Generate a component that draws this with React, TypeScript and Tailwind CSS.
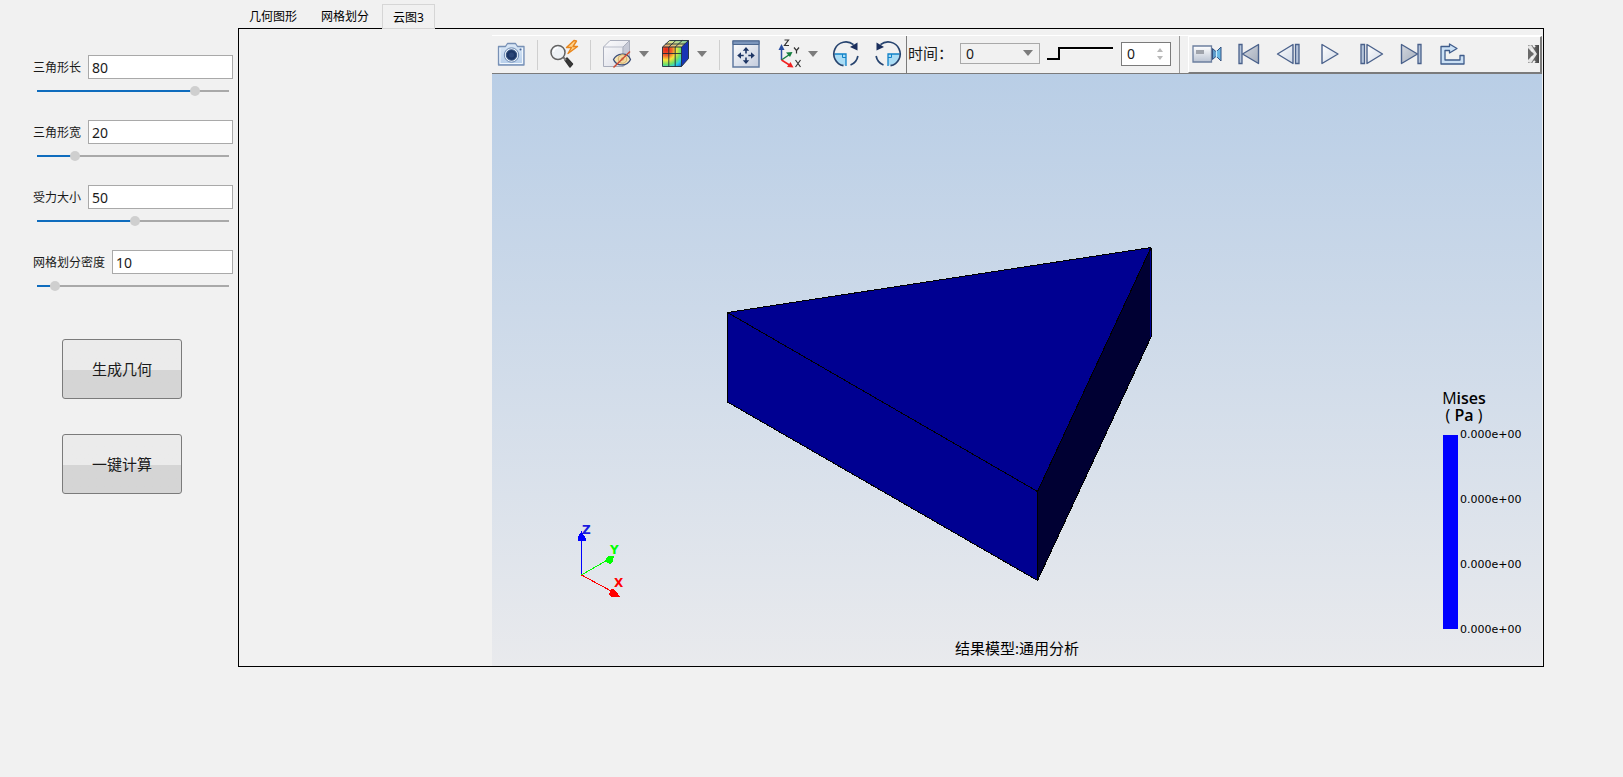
import { useState } from "react";
import type { ReactNode } from "react";

interface ParamProps {
  id: string;
  label: string;
  value: string;
  position: number;
}

const params: ParamProps[] = [
  { id: "length", label: "三角形长", value: "80", position: 84 },
  { id: "width", label: "三角形宽", value: "20", position: 18 },
  { id: "force", label: "受力大小", value: "50", position: 51 },
  { id: "density", label: "网格划分密度", value: "10", position: 7 },
];

const tabs = ["几何图形", "网格划分", "云图3"];

const legend = ["0.000e+00", "0.000e+00", "0.000e+00", "0.000e+00"];

function ParamRow({ id, label, value, position }: ParamProps) {
  const [pos, setPos] = useState(position);

  return (
    <div className="h-[65px]">
      <div className="flex items-center gap-[7px]">
        <label htmlFor={id} className="shrink-0 pt-[2px] text-xs">
          {label}
        </label>
        <input
          id={id}
          defaultValue={value}
          className="h-6 w-full min-w-0 border border-[#a9a9a9] bg-white px-[3px] text-sm outline-none"
        />
      </div>
      <input
        type="range"
        aria-label={label}
        min={0}
        max={100}
        value={pos}
        onChange={(e) => setPos(Number(e.target.value))}
        className="mt-[7px] ml-1 block h-[10px] w-[192px] appearance-none bg-[length:100%_2px] bg-center bg-no-repeat [&::-webkit-slider-thumb]:size-[10px] [&::-webkit-slider-thumb]:appearance-none [&::-webkit-slider-thumb]:rounded-full [&::-webkit-slider-thumb]:bg-[#cfcfcf]"
        style={{
          backgroundImage: `linear-gradient(to right, #0f6cbd ${pos}%, #a9a9a9 ${pos}%)`,
        }}
      />
    </div>
  );
}

function ActionButton({ children }: { children: ReactNode }) {
  return (
    <button className="h-[60px] w-[120px] rounded-[3px] border border-[#7b7b7b] bg-linear-to-b from-[#ebebeb] from-52% to-[#d5d5d5] to-52% text-[15px]">
      {children}
    </button>
  );
}

function ToolButton({ label, className, children }: { label: string; className?: string; children: ReactNode }) {
  return (
    <button aria-label={label} className={`mb-[2px] shrink-0 ${className ?? ""}`}>
      {children}
    </button>
  );
}

function Separator() {
  return <div className="h-[30px] w-px shrink-0 bg-[#cfcfcf]" />;
}

function Caret() {
  return (
    <svg width="10" height="6" viewBox="0 0 10 6">
      <path d="M0 0h10L5 6z" fill="#7c7c7c" />
    </svg>
  );
}

function SnapshotIcon() {
  return (
    <svg width="28" height="28" viewBox="0 0 28 28">
      <defs>
        <linearGradient id="camBody" x1="0" y1="0" x2="0" y2="1">
          <stop offset="0" stopColor="#dce9f7" />
          <stop offset="1" stopColor="#b5cdea" />
        </linearGradient>
      </defs>
      <path d="M1.500 6.500h7l2-3h8l2 3h6.500v18.500h-25.500z" fill="url(#camBody)" stroke="#7790b5" strokeWidth="1.300" strokeLinejoin="round" />
      <path d="M3 8v15.500h22.500V8" fill="none" stroke="#f1f7fd" />
      <circle cx="14.500" cy="15" r="7.200" fill="#e9f1fa" stroke="#6f8bb3" />
      <circle cx="14.500" cy="15" r="5.200" fill="#1d3767" stroke="#34527f" />
      <circle cx="14.500" cy="15" r="2.500" fill="#2b4678" />
      <circle cx="23.500" cy="9.500" r="1" fill="#4a6698" />
    </svg>
  );
}

function QuickZoomIcon() {
  return (
    <svg width="30" height="30" viewBox="0 0 30 30">
      <path d="M15 21l2-2 5.500 6-2.500 3z" fill="#3a3a3a" stroke="#333" strokeWidth="1.500" strokeLinejoin="round" />
      <path d="M13 18l3 3" stroke="#777" strokeWidth="2" />
      <circle cx="8" cy="13.500" r="7" fill="#eef2f6" stroke="#626262" strokeWidth="1.500" />
      <path d="M3.500 13a5 5 0 0 1 4.500-4.500" fill="none" stroke="#fff" strokeWidth="1.500" />
      <path d="M24 1.500L16.500 8.500h5l-3.500 6L27.500 7.500h-4.500L26.500 2z" fill="#ffd28a" stroke="#e8861c" strokeWidth="1.400" strokeLinejoin="round" />
    </svg>
  );
}

function HiddenBoxIcon() {
  return (
    <svg width="30" height="30" viewBox="0 0 30 30">
      <defs>
        <linearGradient id="boxFace" x1="0" y1="0" x2="1" y2="1">
          <stop offset="0" stopColor="#fbfbfd" />
          <stop offset="1" stopColor="#d9dbe4" />
        </linearGradient>
      </defs>
      <path d="M.5 8L7 1.500h19.500v19L20 27.500H.5z" fill="url(#boxFace)" stroke="#a9adbb" strokeLinejoin="round" />
      <path d="M20 8l6.500-6.500v19L20 27.500z" fill="#c5c8d5" stroke="#a9adbb" />
      <path d="M.5 8H20v19" fill="none" stroke="#b9bdca" />
      <path d="M10.500 20.500c3-6.500 14-8 17 0-3 7-14 7.500-17 0z" fill="#f6e3b4" stroke="#3c4e79" strokeWidth="1.300" />
      <circle cx="19.500" cy="20" r="4.300" fill="#f3d9a2" stroke="#d0ad68" />
      <circle cx="19.500" cy="20" r="1.800" fill="#dcb670" />
      <path d="M27 12.500L10.500 28.500" stroke="#cd4b35" strokeWidth="1.500" />
    </svg>
  );
}

function ContourCubeIcon() {
  return (
    <svg width="30" height="30" viewBox="0 0 30 30">
      <defs>
        <radialGradient id="heat" cx="0.200" cy="0.150" r="1.150">
          <stop offset="0" stopColor="#e8251a" />
          <stop offset="0.250" stopColor="#f0602c" />
          <stop offset="0.450" stopColor="#f8e63a" />
          <stop offset="0.650" stopColor="#6be06a" />
          <stop offset="0.800" stopColor="#27cfe8" />
          <stop offset="1" stopColor="#1a5be0" />
        </radialGradient>
        <linearGradient id="heatTop" x1="0" y1="1" x2="1" y2="0">
          <stop offset="0" stopColor="#ea8a5c" />
          <stop offset="0.500" stopColor="#dfe08a" />
          <stop offset="1" stopColor="#63c29b" />
        </linearGradient>
      </defs>
      <path d="M1.500 8L8.500 1.500h19L20.500 8z" fill="url(#heatTop)" />
      <path d="M20.500 8l7-6.500v18L20.500 27.500z" fill="#1733b5" />
      <path d="M1.500 8h19v19.500h-19z" fill="url(#heat)" />
      <path
        d="M1.500 8h19v19.500h-19zM7.800 8v19.500M14.200 8v19.500M1.500 14.500h19M1.500 8L8.500 1.500h19L20.500 8M7.800 8l7-6.500M14.200 8l7-6.500M4.500 5h19.500M27.500 1.500v18L20.500 27.500"
        fill="none"
        stroke="#1f2c3a"
        strokeWidth="0.900"
      />
    </svg>
  );
}

function FitViewIcon() {
  return (
    <svg width="28" height="28" viewBox="0 0 28 28">
      <defs>
        <linearGradient id="fitBg" x1="0" y1="0" x2="1" y2="1">
          <stop offset="0" stopColor="#ffffff" />
          <stop offset="1" stopColor="#c3cbdc" />
        </linearGradient>
      </defs>
      <path d="M1 1h26v26H1z" fill="url(#fitBg)" stroke="#6079a0" strokeWidth="1.500" />
      <path d="M1 1h26v3.500H1z" fill="#7b95bb" stroke="#4c678f" />
      <g fill="#1d3564">
        <path d="M14 7l3.200 3.800h-2.400v2.700h-1.600v-2.700h-2.400z" />
        <path d="M14 24l3.200-3.800h-2.400v-2.700h-1.600v2.700h-2.400z" />
        <path d="M5.200 15.500L9 12.300v2.400h2.700v1.600H9v2.400z" />
        <path d="M22.800 15.500L19 12.300v2.400h-2.700v1.600H19v2.400z" />
      </g>
    </svg>
  );
}

function AxesIcon() {
  return (
    <svg width="24" height="30" viewBox="0 0 24 30">
      <path d="M3.500 21V8" stroke="#2a4fa2" strokeWidth="1.500" />
      <path d="M3.500 5l3 6h-6z" fill="#2a4fa2" />
      <path d="M3.500 21l8-5.500" stroke="#168040" strokeWidth="1.500" />
      <path d="M14.500 13l-2.500 5-4-4.500z" fill="#168040" />
      <path d="M3.500 21l8 5" stroke="#f02020" strokeWidth="1.500" />
      <path d="M15.500 28.500l-6.500-.5 3.500-5z" fill="#f02020" />
      <path d="M6.500 1h4L6.500 6.500h4.500M16 8.500l2.500 3v3M21 8.500l-2.500 3M17.500 21l5 7M22.500 21l-5 7" fill="none" stroke="#333" strokeWidth="1.200" />
    </svg>
  );
}

function RotateIcon({ flipped = false }: { flipped?: boolean }) {
  return (
    <svg width="28" height="28" viewBox="0 0 28 28" className={flipped ? "-scale-x-100" : ""}>
      <path d="M2.500 14h11.500v11.500C7.500 25.500 2.500 20.500 2.500 14z" fill="#a9dcf5" />
      <path d="M2.500 14H14v12" fill="none" stroke="#1182c8" strokeWidth="1.300" />
      <path d="M10.500 14v3.500H14" fill="none" stroke="#1182c8" />
      <path d="M25.900 16a12 12 0 0 1-7.400 9M11.500 25.700A12 12 0 1 1 21.500 4.700" fill="none" stroke="#27446f" strokeWidth="1.700" />
      <path d="M25.500 2.500v8l-7.500-3.500z" fill="#1b2f5d" />
    </svg>
  );
}

function RecordIcon() {
  return (
    <svg width="30" height="18" viewBox="0 0 30 18">
      <defs>
        <linearGradient id="recBody" x1="0" y1="0" x2="0" y2="1">
          <stop offset="0" stopColor="#ffffff" />
          <stop offset="1" stopColor="#bac3d2" />
        </linearGradient>
      </defs>
      <path d="M1 1h18.500v16H1z" fill="url(#recBody)" stroke="#6c7f9f" strokeWidth="1.300" />
      <path d="M4 5h8v4H4z" fill="#a0a4ac" />
      <path d="M20.500 3.500l4 3.500v4l-4 3.500z" fill="#5c9ccb" stroke="#35507f" />
      <path d="M29 2l-4.500 4.500v5L29 16z" fill="#69b8e5" stroke="#35507f" />
      <path d="M24.500 5v8" stroke="#c9ebfa" strokeWidth="1.200" />
    </svg>
  );
}

const PLAYBACK: Record<string, { w: number; tri: string; bar: string; dark: boolean }> = {
  first: { w: 22, tri: "M20.500 1.500v19L4.500 11z", bar: "M1 1.500h3v19H1z", dark: true },
  back: { w: 24, tri: "M17 1.500v19L1.500 11z", bar: "M19.500 1.500h3.500v19h-3.500z", dark: false },
  play: { w: 18, tri: "M1 1.500v19L17 11z", bar: "", dark: false },
  forward: { w: 24, tri: "M7 1.500v19L22.500 11z", bar: "M1 1.500h3.500v19H1z", dark: false },
  last: { w: 22, tri: "M1.500 1.500v19L17.500 11z", bar: "M18 1.500h3v19h-3z", dark: true },
};

function PlaybackIcon({ kind }: { kind: string }) {
  const icon = PLAYBACK[kind];
  return (
    <svg width={icon.w} height="22" viewBox={`0 0 ${icon.w} 22`}>
      <defs>
        <linearGradient id={`tri-${kind}`} x1="0" y1="0" x2="1" y2="1">
          <stop offset="0" stopColor={icon.dark ? "#d4d8df" : "#ffffff"} />
          <stop offset="1" stopColor={icon.dark ? "#a4adbc" : "#d0d9e7"} />
        </linearGradient>
      </defs>
      <path d={icon.tri} fill={`url(#tri-${kind})`} stroke="#4a618b" strokeWidth="1.400" strokeLinejoin="round" />
      {icon.bar && <path d={icon.bar} fill="#b5c4da" stroke="#4a618b" strokeWidth="1.300" />}
    </svg>
  );
}

function LoopIcon() {
  return (
    <svg width="25" height="22" viewBox="0 0 25 22">
      <path
        d="M1 3.500h8.500V1l7.500 4.500-7.500 4.500V7.500H5v9.500h15v-4.500h4V21H1z"
        fill="#cbe0f4"
        stroke="#3f5c8b"
        strokeWidth="1.300"
        strokeLinejoin="round"
      />
    </svg>
  );
}

function OverflowIcon() {
  return (
    <svg width="11" height="18" viewBox="0 0 11 18">
      <defs>
        <linearGradient id="overflowBg" x1="0" y1="0" x2="1" y2="0">
          <stop offset="0" stopColor="#999" />
          <stop offset="1" stopColor="#444" />
        </linearGradient>
      </defs>
      <path d="M0 0h11v18H0z" fill="url(#overflowBg)" />
      <path d="M0 1l3-1 6 9-6 9-3-1z" fill="#e4e4e4" />
      <path d="M0 3l6 6-6 6z" fill="#6a6a6a" />
      <path d="M3 5l2 1M3 13l2-1M5 0l2 2M5 18l2-2" stroke="#f4f4f4" strokeWidth="2" />
    </svg>
  );
}

function Toolbar() {
  return (
    <div className="flex h-[39px] items-center border-t border-b border-t-white border-b-[#7b7b7b]">
      <ToolButton label="截图" className="ml-[5px]">
        <SnapshotIcon />
      </ToolButton>
      <div className="ml-3 flex items-center gap-3">
        <Separator />
        <ToolButton label="快速缩放">
          <QuickZoomIcon />
        </ToolButton>
      </div>
      <div className="ml-[10px] flex items-center gap-3">
        <Separator />
        <ToolButton label="显示模式" className="flex items-center gap-[6px]">
          <HiddenBoxIcon />
          <Caret />
        </ToolButton>
        <ToolButton label="云图" className="flex items-center gap-[6px]">
          <ContourCubeIcon />
          <Caret />
        </ToolButton>
        <Separator />
        <ToolButton label="适应窗口">
          <FitViewIcon />
        </ToolButton>
      </div>
      <ToolButton label="视角" className="ml-[18px] flex items-center gap-[6px]">
        <AxesIcon />
        <Caret />
      </ToolButton>
      <ToolButton label="顺时针旋转" className="ml-[14px]">
        <RotateIcon />
      </ToolButton>
      <ToolButton label="逆时针旋转" className="ml-[14px]">
        <RotateIcon flipped />
      </ToolButton>
      <div className="ml-1 flex h-full items-center border-l border-[#7b7b7b] pb-[2px]">
        <label htmlFor="time" className="ml-px w-[52px] text-[15px]">
          时间：
        </label>
        <div className="relative">
          <select
            id="time"
            className="block h-[21px] w-20 appearance-none border border-[#a9a9a9] bg-[#f1f1f1] px-[5px] text-sm leading-none outline-none"
          >
            <option>0</option>
          </select>
          <span className="pointer-events-none absolute top-[7px] right-[7px]">
            <Caret />
          </span>
        </div>
        <input
          type="range"
          aria-label="时间帧"
          min={0}
          max={10}
          defaultValue={0}
          className="ml-[7px] h-[13px] w-[66px] appearance-none bg-linear-to-b from-black from-[2px] to-white to-[2px] bg-[length:100%_3px] bg-top bg-no-repeat [&::-webkit-slider-thumb]:h-[13px] [&::-webkit-slider-thumb]:w-[13px] [&::-webkit-slider-thumb]:appearance-none [&::-webkit-slider-thumb]:border-r-2 [&::-webkit-slider-thumb]:border-b-2 [&::-webkit-slider-thumb]:border-black [&::-webkit-slider-thumb]:bg-[#f1f1f1]"
        />
        <div className="ml-2 flex h-6 w-[50px] items-center justify-between border border-[#7b7b7b] bg-white pr-[7px] pl-[5px]">
          <input aria-label="帧" defaultValue="0" className="w-5 bg-transparent text-sm outline-none" />
          <svg width="6" height="12" viewBox="0 0 6 12">
            <path d="M0 4h6L3 0zM0 8h6L3 12z" fill="#b9b9b9" />
          </svg>
        </div>
      </div>
      <div className="ml-2 h-full w-px bg-[#9a9a9a]" />
      <div className="ml-2 flex h-full flex-1 items-center border-t border-r-2 border-b border-l border-white border-r-[#7b7b7b] border-b-[#7b7b7b] pr-px pl-[3px]">
        <div className="flex items-center gap-4">
          <ToolButton label="录制">
            <RecordIcon />
          </ToolButton>
          <ToolButton label="首帧">
            <PlaybackIcon kind="first" />
          </ToolButton>
          <ToolButton label="上一帧">
            <PlaybackIcon kind="back" />
          </ToolButton>
          <ToolButton label="播放" className="px-[5px]">
            <PlaybackIcon kind="play" />
          </ToolButton>
          <ToolButton label="下一帧">
            <PlaybackIcon kind="forward" />
          </ToolButton>
          <ToolButton label="末帧">
            <PlaybackIcon kind="last" />
          </ToolButton>
          <ToolButton label="循环" className="pl-[2px]">
            <LoopIcon />
          </ToolButton>
        </div>
        <ToolButton label="更多" className="ml-auto">
          <OverflowIcon />
        </ToolButton>
      </div>
    </div>
  );
}

function Prism() {
  return (
    <svg width="426" height="336" viewBox="0 0 426 336" className="absolute top-[173px] left-[235px]" shapeRendering="crispEdges">
      <g stroke="#000" strokeLinejoin="round">
        <path d="M.5 65.500L424 .5 310.500 244.500z" fill="#000091" />
        <path d="M.5 65.500L310.500 244.500v89L.5 155z" fill="#000091" />
        <path d="M310.500 244.500L424 .5v89.500L310.500 333.500z" fill="#000033" />
      </g>
      <path d="M423 4v86" stroke="#000091" />
    </svg>
  );
}

function Triad() {
  return (
    <svg width="50" height="80" viewBox="0 0 50 80" className="absolute bottom-[66px] left-[84px] font-['DejaVu_Sans',sans-serif] text-xs font-bold">
      <g shapeRendering="crispEdges">
        <path d="M5.500 55V17" stroke="#00f" />
        <path d="M5.500 11l4 7v3h-8v-3z" fill="#00f" />
        <path d="M5.500 55L33 39" stroke="#0f0" />
        <path d="M38 36l-1 5-3 3-4-2v-4l3-2z" fill="#0f0" />
        <path d="M5.500 55L37 72" stroke="#f00" />
        <path d="M35 69.500l3-.5 6 7.500-9 .5-2-3z" fill="#f00" />
      </g>
      <text x="6" y="14" fill="#1a1ae0">Z</text>
      <text x="34" y="34" fill="#0f0">Y</text>
      <text x="38" y="67" fill="#f00">X</text>
    </svg>
  );
}

function Legend() {
  return (
    <div className="absolute right-5 bottom-[29px] w-20 font-['Open_Sans',sans-serif] text-black">
      <div className="w-11 text-center text-base leading-[17px]">
        M<span className="font-semibold">ises</span>
        <br />( <span className="font-semibold">Pa</span> )
      </div>
      <div className="mt-[3px] flex gap-[2px]">
        <div className="my-2 ml-[1px] h-[194px] w-[15px] bg-[#00f]" />
        <div className="flex flex-col justify-between font-['DejaVu_Sans',sans-serif] text-[11px] leading-[15px]">
          {legend.map((value, i) => (
            <span key={i}>{value}</span>
          ))}
        </div>
      </div>
    </div>
  );
}

export default function App() {
  const [active, setActive] = useState(2);

  return (
    <div className="flex min-h-screen bg-[#f1f1f1] pr-[79px] pb-[110px] font-['Noto_Sans','Noto_Sans_CJK_SC',sans-serif] text-[#1a1a1a]">
      {/* 参数面板 */}
      <aside className="w-[238px] shrink-0 pt-[55px] pr-[5px] pl-[33px]">
        {params.map((param) => (
          <ParamRow key={param.id} {...param} />
        ))}
        <div className="mt-6 ml-[29px] flex flex-col gap-[35px]">
          <ActionButton>生成几何</ActionButton>
          <ActionButton>一键计算</ActionButton>
        </div>
      </aside>

      <main className="flex min-w-0 flex-1 flex-col pt-1">
        <div role="tablist" className="flex h-6 text-xs text-black">
          {tabs.map((tab, i) => (
            <button
              key={tab}
              role="tab"
              aria-selected={i === active}
              onClick={() => setActive(i)}
              className={
                i === active
                  ? "relative -mb-px border border-[#d6d6d6] bg-[#f1f1f1] px-[10px] pt-[2px]"
                  : "border border-transparent pt-[2px] pr-3 pl-[10px]"
              }
            >
              {tab}
            </button>
          ))}
        </div>
        <div className="flex flex-1 border border-black pt-[6px] pr-px pl-[253px]">
          <section className="flex min-w-0 flex-1 flex-col">
            <Toolbar />
            <div className="relative flex-1 overflow-hidden bg-linear-to-b from-[#b9cee6] to-[#e9eaed]">
              <Prism />
              <Triad />
              <Legend />
              <p className="absolute bottom-[7px] w-full text-center text-[15px] text-black">结果模型:通用分析</p>
            </div>
          </section>
        </div>
      </main>
    </div>
  );
}
